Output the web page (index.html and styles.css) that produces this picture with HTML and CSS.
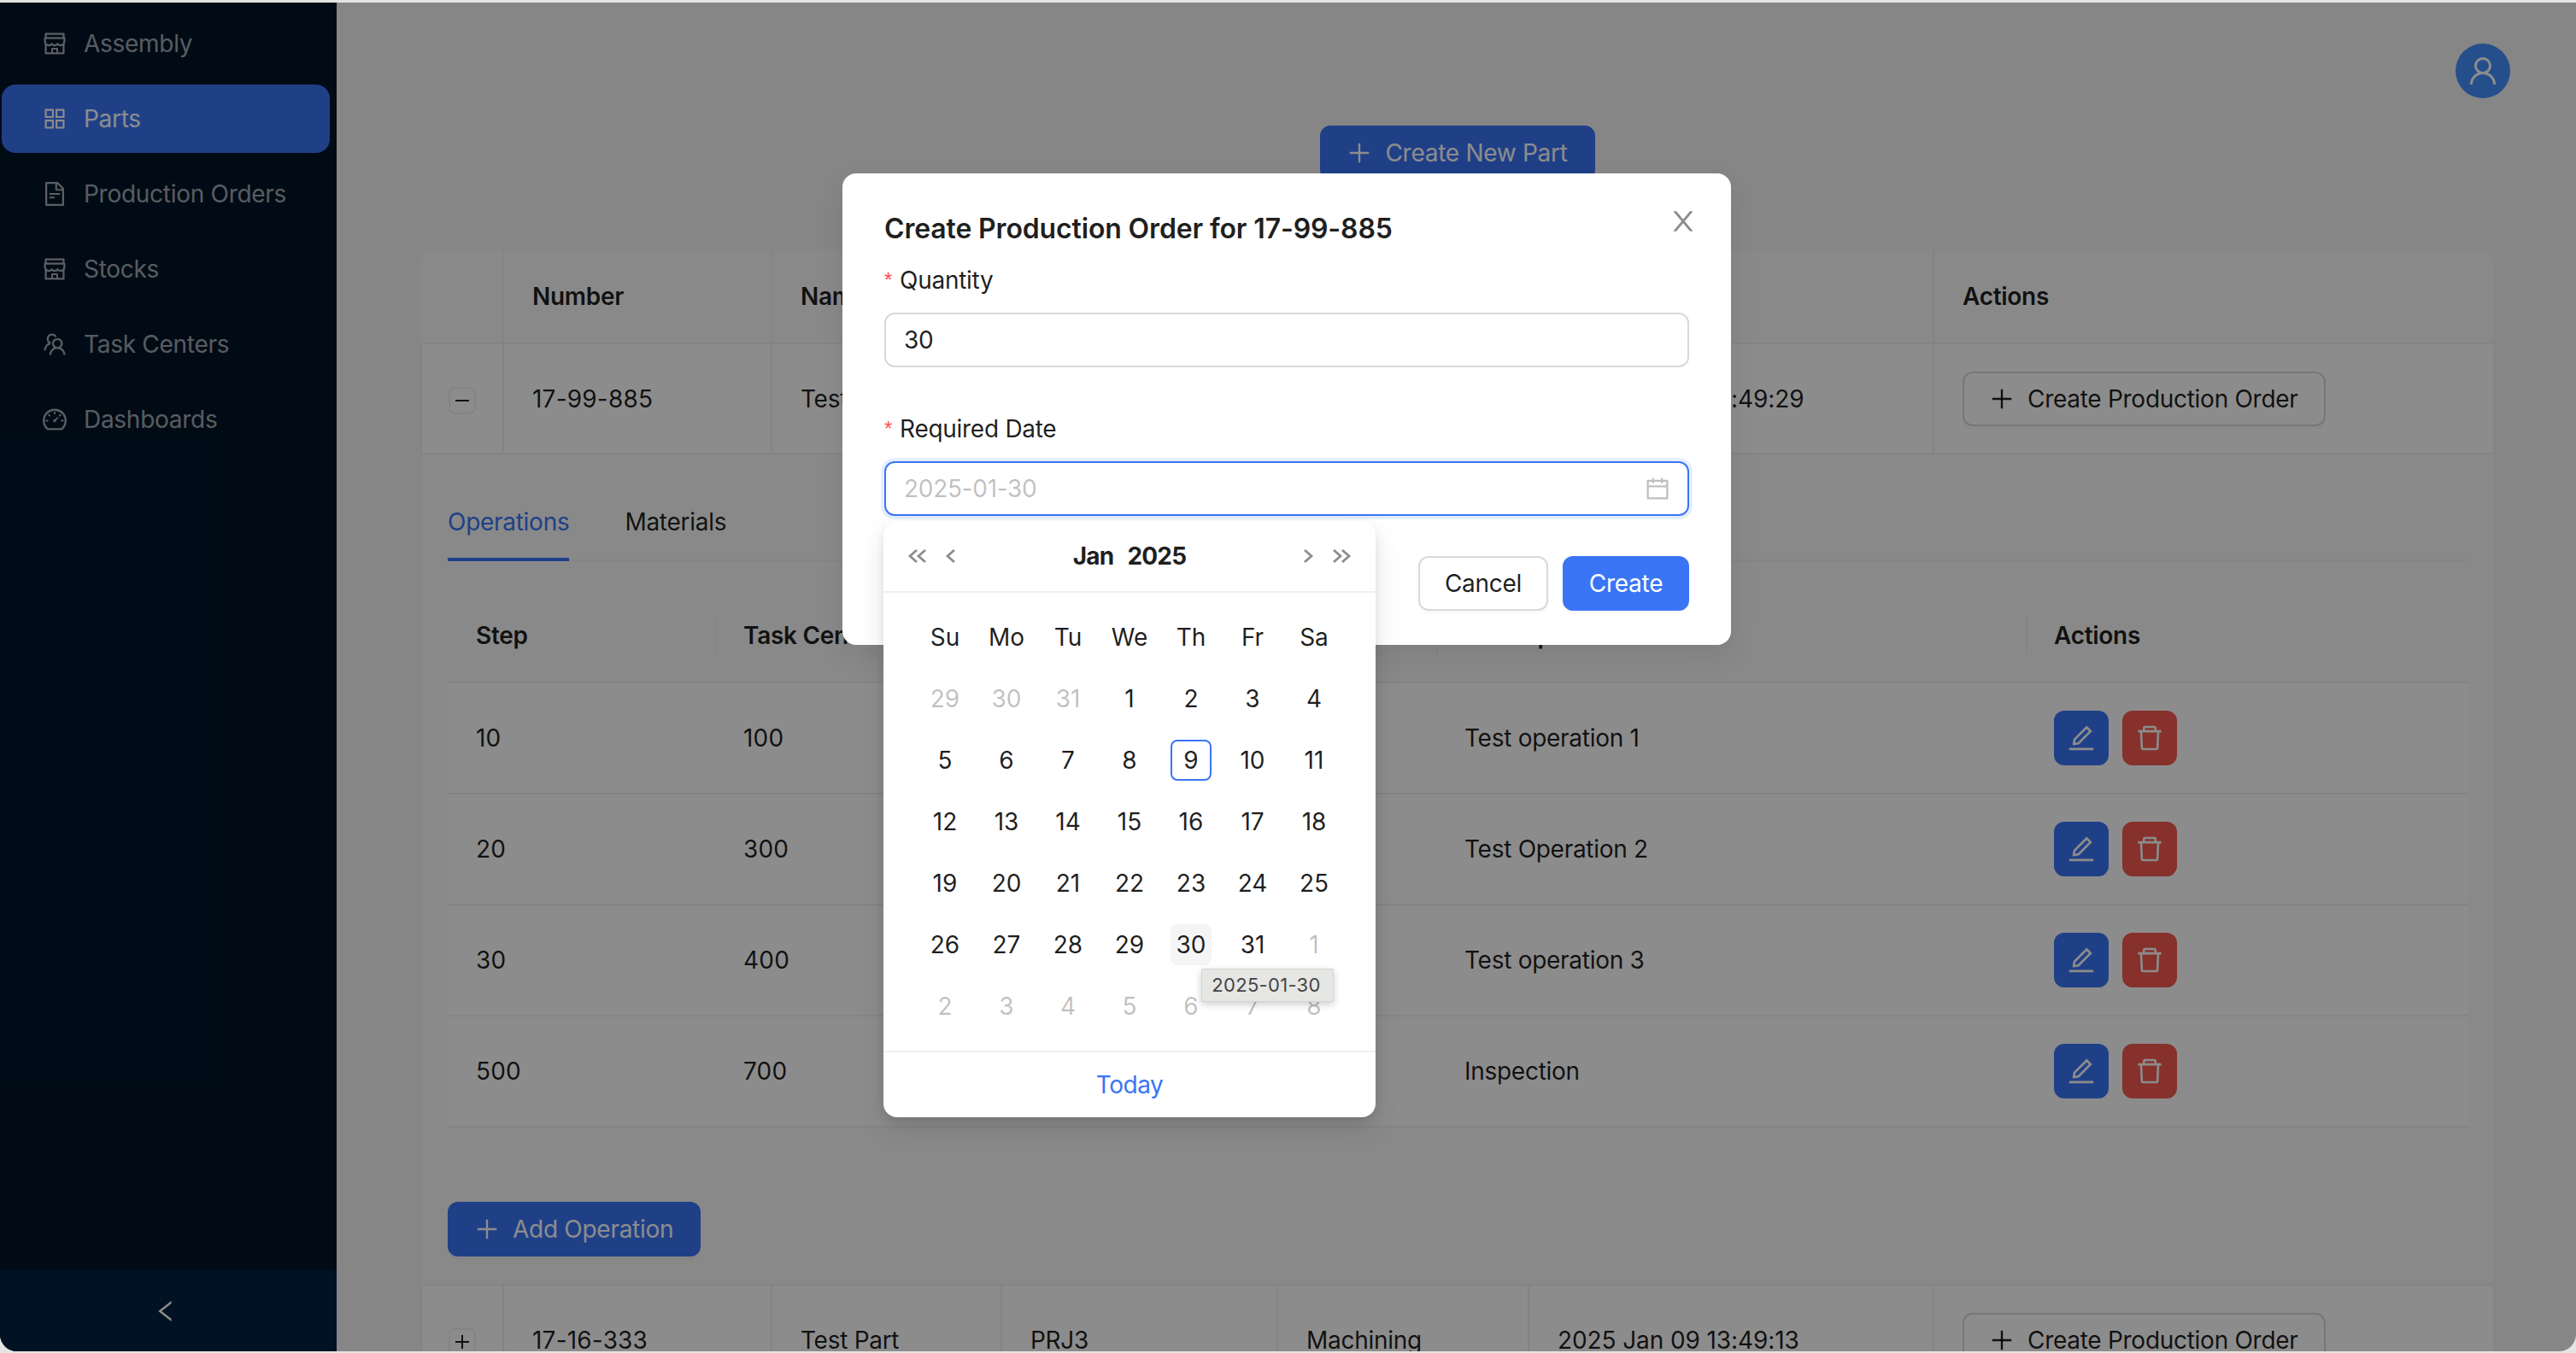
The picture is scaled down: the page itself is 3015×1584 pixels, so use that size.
FILE: index.html
```html
<!DOCTYPE html>
<html lang="en">
<head>
  <meta charset="UTF-8">
  <title>Parts</title>
  <link rel="stylesheet" href="styles.css">
</head>
<body>
  <!-- icon sprite -->
  <svg class="sprite" xmlns="http://www.w3.org/2000/svg">
    <symbol id="i-plus" viewBox="64 64 896 896"><path d="M482 152h60q8 0 8 8v704q0 8-8 8h-60q-8 0-8-8V160q0-8 8-8z"/><path d="M192 474h672q8 0 8 8v60q0 8-8 8H160q-8 0-8-8v-60q0-8 8-8z"/></symbol>
    <symbol id="i-close" viewBox="64 64 896 896"><path d="M563.8 512l262.5-312.9c4.4-5.2.7-13.1-6.1-13.1h-79.8c-4.7 0-9.2 2.1-12.3 5.7L511.6 449.8 295.1 191.7c-3-3.6-7.5-5.7-12.3-5.7H203c-6.8 0-10.5 7.9-6.1 13.1L459.4 512 196.9 824.9A7.95 7.95 0 00203 838h79.8c4.7 0 9.2-2.1 12.3-5.7l216.5-258.1 216.5 258.1c3 3.6 7.5 5.7 12.3 5.7h79.8c6.8 0 10.5-7.9 6.1-13.1L563.8 512z"/></symbol>
    <symbol id="i-edit" viewBox="64 64 896 896"><path d="M257.7 752c2 0 4-.2 6-.5L431.9 722c2-.4 3.9-1.3 5.3-2.8l423.9-423.9a9.96 9.96 0 000-14.1L694.9 114.9c-1.9-1.9-4.4-2.9-7.1-2.9s-5.2 1-7.1 2.9L256.8 538.8c-1.5 1.5-2.4 3.3-2.8 5.3l-29.5 168.2a33.5 33.5 0 009.4 29.8c6.6 6.4 14.9 9.9 23.8 9.9zm67.4-174.4L687.8 215l73.3 73.3-362.7 362.6-88.9 15.7 15.6-89zM880 836H144c-17.7 0-32 14.3-32 32v36c0 4.4 3.6 8 8 8h784c4.4 0 8-3.6 8-8v-36c0-17.7-14.3-32-32-32z"/></symbol>
    <symbol id="i-delete" viewBox="64 64 896 896"><path d="M360 184h-8c4.4 0 8-3.6 8-8v8h304v-8c0 4.4 3.6 8 8 8h-8v72h72v-80c0-35.3-28.7-64-64-64H352c-35.3 0-64 28.7-64 64v80h72v-72zm504 72H160c-17.7 0-32 14.3-32 32v32c0 4.4 3.6 8 8 8h60.4l24.7 523c1.6 34.1 29.8 61 63.9 61h454c34.2 0 62.3-26.8 63.9-61l24.7-523H888c4.4 0 8-3.6 8-8v-32c0-17.7-14.3-32-32-32zM731.3 840H292.7l-24.2-512h487l-24.2 512z"/></symbol>
    <symbol id="i-calendar" viewBox="64 64 896 896"><path d="M880 184H712v-64c0-4.4-3.6-8-8-8h-56c-4.4 0-8 3.6-8 8v64H384v-64c0-4.4-3.6-8-8-8h-56c-4.4 0-8 3.6-8 8v64H144c-17.7 0-32 14.3-32 32v664c0 17.7 14.3 32 32 32h736c17.7 0 32-14.3 32-32V216c0-17.7-14.3-32-32-32zm-40 656H184V460h656v380zM184 392V256h128v48c0 4.4 3.6 8 8 8h56c4.4 0 8-3.6 8-8v-48h256v48c0 4.4 3.6 8 8 8h56c4.4 0 8-3.6 8-8v-48h128v136H184z"/></symbol>
    <symbol id="i-user" viewBox="64 64 896 896"><path d="M858.5 763.6a374 374 0 00-80.6-119.5 375.63 375.63 0 00-119.5-80.6c-.4-.2-.8-.3-1.2-.5C719.5 518 760 444.7 760 362c0-137-111-248-248-248S264 225 264 362c0 82.7 40.5 156 102.8 201.1-.4.2-.8.3-1.2.5-44.8 18.9-85 46-119.5 80.6a375.63 375.63 0 00-80.6 119.5A371.7 371.7 0 00136 901.8a8 8 0 008 8.2h60c4.4 0 7.9-3.5 8-7.8 2-77.2 33-149.5 87.8-204.3 56.7-56.7 132-87.9 212.2-87.9s155.5 31.2 212.2 87.9C779 752.7 810 825 812 902.2c.1 4.4 3.6 7.8 8 7.8h60a8 8 0 008-8.2c-1-47.8-10.9-94.3-29.5-138.2zM512 534c-45.9 0-89.1-17.9-121.6-50.4S340 407.9 340 362c0-45.9 17.9-89.1 50.4-121.6S466.1 190 512 190s89.1 17.9 121.6 50.4S684 316.1 684 362c0 45.9-17.9 89.1-50.4 121.6S557.9 534 512 534z"/></symbol>
    <symbol id="i-shop" viewBox="64 64 896 896"><path d="M882 272.1V144c0-17.7-14.3-32-32-32H174c-17.7 0-32 14.3-32 32v128.1c-16.7 1-30 14.9-30 31.9v131.7a177 177 0 0014.4 70.4c4.3 10.2 9.6 19.8 15.6 28.9v345c0 17.6 14.3 32 32 32h676c17.7 0 32-14.3 32-32V535a175 175 0 0015.6-28.9c9.5-22.3 14.4-46 14.4-70.4V304c0-17-13.3-30.9-30-31.9zM214 184h596v88H214v-88zm362 656.1H448V736h128v104.1zm234 0H640V704c0-17.7-14.3-32-32-32H416c-17.7 0-32 14.3-32 32v136.1H214V597.9c2.9 1.4 5.9 2.8 9 4 22.3 9.4 46 14.1 70.4 14.1s48-4.7 70.4-14.1c13.8-5.8 26.8-13.2 38.7-22.1.2-.1.4-.1.6 0a180.4 180.4 0 0038.7 22.1c22.3 9.4 46 14.1 70.4 14.1 24.4 0 48-4.7 70.4-14.1 13.8-5.8 26.8-13.2 38.7-22.1.2-.1.4-.1.6 0a180.4 180.4 0 0038.7 22.1c22.3 9.4 46 14.1 70.4 14.1 24.4 0 48-4.7 70.4-14.1 3-1.3 6-2.6 9-4v242.2zm30-404.4c0 59.8-49 108.3-109.3 108.3-40.8 0-76.4-22.1-95.2-54.9-2.9-5-8.1-8.1-13.9-8.1h-.6c-5.7 0-11 3.1-13.9 8.1A109.24 109.24 0 01512 544c-40.7 0-76.2-22-95-54.7-3-5.1-8.4-8.3-14.3-8.3s-11.4 3.2-14.3 8.3a109.63 109.63 0 01-95.1 54.7C233 544 184 495.5 184 435.7v-91.2c0-.3.2-.5.5-.5h655c.3 0 .5.2.5.5v91.2z"/></symbol>
    <symbol id="i-grid" viewBox="64 64 896 896"><path d="M464 144H160c-8.8 0-16 7.2-16 16v304c0 8.8 7.2 16 16 16h304c8.8 0 16-7.2 16-16V160c0-8.8-7.2-16-16-16zm-52 268H212V212h200v200zm452-268H560c-8.8 0-16 7.2-16 16v304c0 8.8 7.2 16 16 16h304c8.8 0 16-7.2 16-16V160c0-8.8-7.2-16-16-16zm-52 268H612V212h200v200zM464 544H160c-8.8 0-16 7.2-16 16v304c0 8.8 7.2 16 16 16h304c8.8 0 16-7.2 16-16V560c0-8.8-7.2-16-16-16zm-52 268H212V612h200v200zm452-268H560c-8.8 0-16 7.2-16 16v304c0 8.8 7.2 16 16 16h304c8.8 0 16-7.2 16-16V560c0-8.8-7.2-16-16-16zm-52 268H612V612h200v200z"/></symbol>
    <symbol id="i-file" viewBox="64 64 896 896"><path d="M854.6 288.6L639.4 73.4c-6-6-14.1-9.4-22.6-9.4H192c-17.7 0-32 14.3-32 32v832c0 17.7 14.3 32 32 32h640c17.7 0 32-14.3 32-32V311.3c0-8.5-3.4-16.7-9.4-22.7zM790.2 326H602V137.8L790.2 326zm1.8 562H232V136h302v216a42 42 0 0042 42h216v494zM504 618H320c-4.4 0-8 3.6-8 8v48c0 4.4 3.6 8 8 8h184c4.4 0 8-3.6 8-8v-48c0-4.4-3.6-8-8-8zM312 490v48c0 4.4 3.6 8 8 8h384c4.4 0 8-3.6 8-8v-48c0-4.4-3.6-8-8-8H320c-4.4 0-8 3.6-8 8z"/></symbol>
    <symbol id="i-team" viewBox="64 64 896 896"><path d="M824.2 699.9a301.55 301.55 0 00-86.4-60.4C783.1 602.8 812 546.8 812 484c0-110.8-92.4-201.7-203.2-200-109.1 1.7-197 90.6-197 200 0 62.8 29 118.8 74.2 155.5a300.95 300.95 0 00-86.4 60.4C345 754.6 314 826.8 312 903.8a8 8 0 008 8.2h56c4.3 0 7.9-3.4 8-7.7 1.9-58 25.4-112.3 66.7-153.5A226.62 226.62 0 01612 684c60.9 0 118.2 23.7 161.3 66.8C814.5 792 838 846.3 840 904.3c.1 4.3 3.7 7.7 8 7.7h56a8 8 0 008-8.2c-2-77-33-149.2-87.8-203.9zM612 612c-34.2 0-66.4-13.3-90.5-37.5a126.86 126.86 0 01-37.5-91.8c.3-32.8 13.4-64.5 36.3-88 24-24.6 56.1-38.3 90.4-38.7 33.9-.3 66.8 12.9 91 36.6 24.8 24.3 38.4 56.8 38.4 91.4 0 34.2-13.3 66.3-37.5 90.5A127.3 127.3 0 01612 612zM361.5 510.4c-.9-8.7-1.4-17.5-1.4-26.4 0-15.9 1.5-31.4 4.3-46.5.7-3.6-1.2-7.3-4.5-8.8-13.6-6.1-26.1-14.5-36.9-25.1a127.54 127.54 0 01-38.7-95.4c.9-32.1 13.8-62.6 36.3-85.6 24.7-25.3 57.9-39.1 93.2-38.7 31.9.3 62.7 12.6 86 34.4 7.9 7.4 14.7 15.6 20.4 24.4 2 3.1 5.9 4.4 9.3 3.2 17.6-6.1 36.2-10.4 55.3-12.4 5.6-.6 8.8-6.6 6.3-11.6-32.5-64.3-98.9-108.7-175.7-109.9-110.9-1.7-203.3 89.2-203.3 199.9 0 62.8 28.9 118.8 74.2 155.5-31.8 14.7-61.1 35-86.5 60.4-54.8 54.7-85.8 126.9-87.8 204a8 8 0 008 8.2h56.1c4.3 0 7.9-3.4 8-7.7 1.9-58 25.4-112.3 66.7-153.5 29.4-29.4 65.4-49.8 104.7-59.7 3.9-1 6.5-4.7 6-8.7z"/></symbol>
    <symbol id="i-dash" viewBox="64 64 896 896"><path d="M924.8 385.6a446.7 446.7 0 00-96-142.4 446.7 446.7 0 00-142.4-96C631.1 123.8 572.5 112 512 112s-119.1 11.8-174.4 35.2a446.7 446.7 0 00-142.4 96 446.7 446.7 0 00-96 142.4C75.8 440.9 64 499.5 64 560c0 132.7 58.3 257.7 159.9 343.1l1.7 1.4c5.8 4.8 13.1 7.5 20.6 7.5h531.7c7.5 0 14.8-2.7 20.6-7.5l1.7-1.4C901.7 817.7 960 692.7 960 560c0-60.5-11.9-119.1-35.2-174.4zM761.4 836H262.6A371.12 371.12 0 01140 560c0-99.4 38.7-192.8 109-263 70.3-70.3 163.7-109 263-109 99.4 0 192.8 38.7 263 109 70.3 70.3 109 163.7 109 263 0 105.6-44.5 205.5-122.6 276zM623.5 421.5a8.03 8.03 0 00-11.3 0L527.7 506c-18.7-5-39.4-.2-54.1 14.5a55.95 55.95 0 000 79.2 55.95 55.95 0 0079.2 0 55.87 55.87 0 0014.5-54.1l84.5-84.5c3.1-3.1 3.1-8.2 0-11.3l-28.3-28.3zM490 320h44c4.4 0 8-3.6 8-8v-80c0-4.4-3.6-8-8-8h-44c-4.4 0-8 3.6-8 8v80c0 4.4 3.6 8 8 8zm260 218v44c0 4.4 3.6 8 8 8h80c4.4 0 8-3.6 8-8v-44c0-4.4-3.6-8-8-8h-80c-4.4 0-8 3.6-8 8zm12.7-197.2l-31.1-31.1a8.03 8.03 0 00-11.3 0l-56.6 56.6a8.03 8.03 0 000 11.3l31.1 31.1c3.1 3.1 8.2 3.1 11.3 0l56.6-56.6c3.1-3.1 3.1-8.2 0-11.3zm-458.6-31.1a8.03 8.03 0 00-11.3 0l-31.1 31.1a8.03 8.03 0 000 11.3l56.6 56.6c3.1 3.1 8.2 3.1 11.3 0l31.1-31.1c3.1-3.1 3.1-8.2 0-11.3l-56.6-56.6zM262 530h-80c-4.4 0-8 3.6-8 8v44c0 4.4 3.6 8 8 8h80c4.4 0 8-3.6 8-8v-44c0-4.4-3.6-8-8-8z"/></symbol>
    <symbol id="i-left" viewBox="64 64 896 896"><path d="M724 218.3V141c0-6.7-7.7-10.4-12.9-6.3L260.3 486.8a31.86 31.86 0 000 50.3l450.8 352.1c5.3 4.1 12.9.4 12.9-6.3v-77.3c0-4.9-2.3-9.6-6.1-12.6l-360-281 360-281.1c3.8-3 6.1-7.7 6.1-12.6z"/></symbol>
  </svg>

  <div class="app">
    <!-- Sidebar -->
    <aside class="sidebar">
      <nav class="menu">
        <a class="menu-item"><svg class="icon"><use href="#i-shop"/></svg>Assembly</a>
        <a class="menu-item active"><svg class="icon"><use href="#i-grid"/></svg>Parts</a>
        <a class="menu-item"><svg class="icon"><use href="#i-file"/></svg>Production Orders</a>
        <a class="menu-item"><svg class="icon"><use href="#i-shop"/></svg>Stocks</a>
        <a class="menu-item"><svg class="icon"><use href="#i-team"/></svg>Task Centers</a>
        <a class="menu-item"><svg class="icon"><use href="#i-dash"/></svg>Dashboards</a>
      </nav>
      <div class="collapse"><svg class="icon-collapse"><use href="#i-left"/></svg></div>
    </aside>

    <!-- Main content -->
    <main class="main">
      <div class="topbar">
        <span class="avatar"><svg class="icon-avatar"><use href="#i-user"/></svg></span>
      </div>
      <div class="create-row">
        <button class="btn primary"><svg class="icon"><use href="#i-plus"/></svg>Create New Part</button>
      </div>

      <table class="parts">
        <colgroup>
          <col class="c-expand"><col class="c-number"><col class="c-name"><col class="c-project"><col class="c-type"><col class="c-date"><col class="c-actions">
        </colgroup>
        <thead>
          <tr><th></th><th>Number</th><th>Name</th><th>Project</th><th>Type</th><th>Created</th><th>Actions</th></tr>
        </thead>
        <tbody>
          <tr class="part-row">
            <td><span class="expander minus"></span></td>
            <td class="num">17-99-885</td>
            <td>Test Part</td>
            <td>PRJ1</td>
            <td>Machining</td>
            <td class="date">2025 Jan 09 13:49:29</td>
            <td><button class="btn"><svg class="icon"><use href="#i-plus"/></svg>Create Production Order</button></td>
          </tr>
          <tr>
            <td colspan="7" class="expanded">
              <div class="tabs">
                <span class="tab active">Operations</span>
                <span class="tab">Materials</span>
              </div>
              <table class="ops">
                <colgroup>
                  <col class="o-step"><col class="o-center"><col class="o-time"><col class="o-desc"><col class="o-actions">
                </colgroup>
                <thead>
                  <tr><th>Step</th><th>Task Center</th><th></th><th>Description</th><th>Actions</th></tr>
                </thead>
                <tbody>
                  <tr>
                    <td class="num">10</td><td class="num">100</td><td></td><td>Test operation 1</td>
                    <td><div class="row-actions"><button class="icon-btn edit"><svg class="icon-lg"><use href="#i-edit"/></svg></button><button class="icon-btn del"><svg class="icon-lg"><use href="#i-delete"/></svg></button></div></td>
                  </tr>
                  <tr>
                    <td class="num">20</td><td class="num">300</td><td></td><td>Test Operation 2</td>
                    <td><div class="row-actions"><button class="icon-btn edit"><svg class="icon-lg"><use href="#i-edit"/></svg></button><button class="icon-btn del"><svg class="icon-lg"><use href="#i-delete"/></svg></button></div></td>
                  </tr>
                  <tr>
                    <td class="num">30</td><td class="num">400</td><td></td><td>Test operation 3</td>
                    <td><div class="row-actions"><button class="icon-btn edit"><svg class="icon-lg"><use href="#i-edit"/></svg></button><button class="icon-btn del"><svg class="icon-lg"><use href="#i-delete"/></svg></button></div></td>
                  </tr>
                  <tr>
                    <td class="num">500</td><td class="num">700</td><td></td><td>Inspection</td>
                    <td><div class="row-actions"><button class="icon-btn edit"><svg class="icon-lg"><use href="#i-edit"/></svg></button><button class="icon-btn del"><svg class="icon-lg"><use href="#i-delete"/></svg></button></div></td>
                  </tr>
                </tbody>
              </table>
              <button class="btn primary add-op"><svg class="icon"><use href="#i-plus"/></svg>Add Operation</button>
            </td>
          </tr>
          <tr class="part-row">
            <td><span class="expander plus"></span></td>
            <td class="num">17-16-333</td>
            <td>Test Part</td>
            <td>PRJ3</td>
            <td>Machining</td>
            <td class="date">2025 Jan 09 13:49:13</td>
            <td><button class="btn"><svg class="icon"><use href="#i-plus"/></svg>Create Production Order</button></td>
          </tr>
        </tbody>
      </table>
    </main>

    <!-- Modal -->
    <div class="overlay">
      <div class="modal">
        <svg class="modal-close"><use href="#i-close"/></svg>
        <h2 class="modal-title">Create Production Order for 17-99-885</h2>
        <label class="field-label"><span class="req">*</span>Quantity</label>
        <div class="input">30</div>
        <label class="field-label second"><span class="req">*</span>Required Date</label>
        <div class="input focused">
          <span class="placeholder">2025-01-30</span>
          <svg class="icon icon-cal"><use href="#i-calendar"/></svg>
        </div>
        <div class="modal-footer">
          <button class="btn cancel">Cancel</button>
          <button class="btn solid">Create</button>
        </div>

        <!-- Date picker dropdown -->
        <div class="picker">
          <div class="picker-head">
            <div class="nav-group">
              <svg class="nav" viewBox="0 0 24 18"><path d="M11 2 3 9l8 7M21 2l-8 7 8 7"/></svg>
              <svg class="nav single" viewBox="0 0 14 18"><path d="M11 2 3 9l8 7"/></svg>
            </div>
            <div class="picker-title"><span>Jan</span><span>2025</span></div>
            <div class="nav-group">
              <svg class="nav single" viewBox="0 0 14 18"><path d="M3 2l8 7-8 7"/></svg>
              <svg class="nav" viewBox="0 0 24 18"><path d="M3 2l8 7-8 7M13 2l8 7-8 7"/></svg>
            </div>
          </div>
          <div class="picker-body">
            <span class="wd">Su</span><span class="wd">Mo</span><span class="wd">Tu</span><span class="wd">We</span><span class="wd">Th</span><span class="wd">Fr</span><span class="wd">Sa</span>
            <span class="day out"><i>29</i></span><span class="day out"><i>30</i></span><span class="day out"><i>31</i></span><span class="day"><i>1</i></span><span class="day"><i>2</i></span><span class="day"><i>3</i></span><span class="day"><i>4</i></span>
            <span class="day"><i>5</i></span><span class="day"><i>6</i></span><span class="day"><i>7</i></span><span class="day"><i>8</i></span><span class="day today"><i>9</i></span><span class="day"><i>10</i></span><span class="day"><i>11</i></span>
            <span class="day"><i>12</i></span><span class="day"><i>13</i></span><span class="day"><i>14</i></span><span class="day"><i>15</i></span><span class="day"><i>16</i></span><span class="day"><i>17</i></span><span class="day"><i>18</i></span>
            <span class="day"><i>19</i></span><span class="day"><i>20</i></span><span class="day"><i>21</i></span><span class="day"><i>22</i></span><span class="day"><i>23</i></span><span class="day"><i>24</i></span><span class="day"><i>25</i></span>
            <span class="day"><i>26</i></span><span class="day"><i>27</i></span><span class="day"><i>28</i></span><span class="day"><i>29</i></span><span class="day hover"><i>30</i></span><span class="day"><i>31</i></span><span class="day out"><i>1</i></span>
            <span class="day out"><i>2</i></span><span class="day out"><i>3</i></span><span class="day out"><i>4</i></span><span class="day out"><i>5</i></span><span class="day out"><i>6</i></span><span class="day out"><i>7</i></span><span class="day out"><i>8</i></span>
          </div>
          <div class="picker-foot">Today</div>
          <div class="native-tip">2025-01-30</div>
        </div>
      </div>
    </div>
  </div>
</body>
</html>
```

FILE: styles.css
```css
/* Basic styling */
* {
  box-sizing: border-box;
}

html, body {
  height: 100%;
  margin: 0;
  overflow: hidden;
}

body {
  background: #e4e4e4;
  padding: 3px 0 2px;
  font-family: Inter, "Liberation Sans", sans-serif;
  font-size: 28px;
  line-height: 44px;
  letter-spacing: -0.28px;
  color: rgba(0, 0, 0, 0.88);
}

.sprite {
  display: none;
}

button {
  font: inherit;
  letter-spacing: inherit;
}

.num {
  letter-spacing: 0.2px;
}

.date {
  letter-spacing: -0.1px;
}

.app {
  position: relative;
  display: flex;
  height: 100%;
  overflow: hidden;
  background: #f5f5f5;
  border-radius: 0 0 20px 20px;
}

.icon {
  width: 28px;
  height: 28px;
  flex: none;
  fill: currentColor;
}

.icon-lg {
  width: 32px;
  height: 32px;
  fill: currentColor;
}

/* Sidebar */
.sidebar {
  width: 394px;
  flex: none;
  display: flex;
  flex-direction: column;
  background: #001529;
}

.menu {
  flex: 1;
  padding: 8px 8px 0 2px;
  display: flex;
  flex-direction: column;
  gap: 8px;
}

.menu-item {
  height: 80px;
  padding-left: 48px;
  display: flex;
  align-items: center;
  gap: 20px;
  border-radius: 16px;
  color: rgba(255, 255, 255, 0.65);
}

.menu-item.active {
  background: #3a75f6;
  color: #fff;
}

.collapse {
  height: 95px;
  display: flex;
  align-items: center;
  justify-content: center;
  background: #002140;
  color: #fff;
}

.icon-collapse {
  width: 28px;
  height: 28px;
  margin-right: 6px;
  fill: currentColor;
}

/* Main */
.main {
  flex: 1;
  min-width: 0;
  padding: 0 95px 0 98px;
}

.topbar {
  display: flex;
  justify-content: flex-end;
  padding: 48px 0 32px;
  margin-right: -18px;
}

.avatar {
  width: 64px;
  height: 64px;
  border-radius: 50%;
  background: #4291fe;
  color: #fff;
  display: flex;
  align-items: center;
  justify-content: center;
}

.icon-avatar {
  width: 36px;
  height: 36px;
  fill: currentColor;
}

.create-row {
  display: flex;
  justify-content: center;
  margin-bottom: 82px;
}

.btn {
  height: 64px;
  padding: 0 30px;
  display: inline-flex;
  align-items: center;
  gap: 16px;
  border: 2px solid #d9d9d9;
  border-radius: 12px;
  background: #fff;
  color: rgba(0, 0, 0, 0.88);
  box-shadow: 0 4px 0 rgba(0, 0, 0, 0.02);
}

.btn.primary,
.btn.solid {
  background: #3a75f6;
  border-color: #3a75f6;
  color: #fff;
}

/* Tables */
table {
  width: 100%;
  border-collapse: separate;
  border-spacing: 0;
  table-layout: fixed;
}

th {
  font-weight: 600;
  text-align: left;
}

.parts {
  width: 2428px;
  background: #fff;
  border-radius: 16px 16px 0 0;
}

.c-expand { width: 98px; }
.c-number { width: 314px; }
.c-name { width: 269px; }
.c-project { width: 323px; }
.c-type { width: 294px; }
.c-date { width: 474px; }
.c-actions { width: 656px; }

.parts > thead th {
  height: 110px;
  padding: 0 32px 0 33px;
  background: #fafafa;
  border-bottom: 2px solid #f0f0f0;
  border-right: 2px solid #f0f0f0;
}

.parts > thead th:first-child {
  border-top-left-radius: 16px;
}

.parts > thead th:last-child {
  border-top-right-radius: 16px;
}

.part-row td {
  height: 129px;
  padding: 0 32px 0 33px;
  border-bottom: 2px solid #f0f0f0;
  border-right: 2px solid #f0f0f0;
}

.part-row td:first-child {
  padding: 0;
  text-align: center;
  border-left: 2px solid #f0f0f0;
}

.expander {
  position: relative;
  display: inline-block;
  width: 32px;
  height: 32px;
  vertical-align: middle;
  border: 2px solid #f0f0f0;
  border-radius: 8px;
  background: #fff;
}

.expander::before,
.plus::after {
  content: "";
  position: absolute;
  left: 6px;
  right: 6px;
  top: 13px;
  height: 2px;
  background: rgba(0, 0, 0, 0.88);
}

.plus::after {
  left: 13px;
  right: 13px;
  top: 6px;
  width: 2px;
  height: 16px;
}

.expanded {
  padding: 35px 30px 32px;
  background: #fafafa;
  border-bottom: 2px solid #f0f0f0;
  border-left: 2px solid #f0f0f0;
  border-right: 2px solid #f0f0f0;
}

.tabs {
  display: flex;
  gap: 65px;
  border-bottom: 2px solid #f0f0f0;
  margin-bottom: 33px;
}

.tab {
  height: 90px;
  padding-top: 22px;
  margin-bottom: -2px;
}

.tab.active {
  color: #3a75f6;
  border-bottom: 4px solid #3a75f6;
}

.o-step { width: 313px; }
.o-center { width: 422px; }
.o-time { width: 422px; }
.o-desc { width: 690px; }
.o-actions { width: 518px; }

.ops th {
  position: relative;
  height: 110px;
  padding: 0 33px;
  border-bottom: 2px solid #f0f0f0;
}

.ops th + th::before {
  content: "";
  position: absolute;
  left: 0;
  top: 33px;
  height: 42px;
  width: 2px;
  background: #f0f0f0;
}

.ops td {
  height: 130px;
  padding: 0 33px;
  background: #fff;
  border-bottom: 2px solid #f0f0f0;
}

.row-actions {
  display: flex;
  gap: 16px;
}

.icon-btn {
  width: 64px;
  height: 64px;
  padding: 0;
  border: 0;
  border-radius: 12px;
  display: flex;
  align-items: center;
  justify-content: center;
  color: #fff;
}

.icon-btn.edit {
  background: #3a75f6;
}

.icon-btn.del {
  background: #f55a50;
}

.add-op {
  margin-top: 87px;
  display: flex;
}

/* Modal */
.overlay {
  position: absolute;
  inset: 0;
  background: rgba(0, 0, 0, 0.45);
}

.modal {
  position: relative;
  width: 1040px;
  height: 552px;
  margin: 200px 0 0 986px;
  padding: 43px 49px 40px;
  background: #fff;
  border-radius: 16px;
  box-shadow: 0 12px 32px rgba(0, 0, 0, 0.08);
}

.modal-close {
  position: absolute;
  top: 40px;
  right: 40px;
  width: 32px;
  height: 32px;
  fill: rgba(0, 0, 0, 0.45);
}

.modal-title {
  margin: 0 0 16px;
  font-size: 32px;
  font-weight: 600;
  line-height: 44px;
  letter-spacing: -0.15px;
}

.field-label {
  display: flex;
  height: 44px;
  align-items: center;
  margin-bottom: 16px;
}

.field-label.second {
  margin-top: 50px;
}

.req {
  color: #ff4d4f;
  margin-right: 9px;
  font-family: "Liberation Sans", sans-serif;
  font-size: 24px;
  line-height: 1;
}

.input {
  height: 64px;
  padding: 0 21px;
  display: flex;
  align-items: center;
  justify-content: space-between;
  border: 2px solid #d9d9d9;
  border-radius: 12px;
}

.input.focused {
  border-color: #3a75f6;
  box-shadow: 0 0 0 4px rgba(5, 100, 255, 0.1);
}

.placeholder,
.icon-cal {
  color: rgba(0, 0, 0, 0.25);
}

.modal-footer {
  margin-top: 47px;
  display: flex;
  justify-content: flex-end;
  gap: 17px;
}

.modal-footer .btn {
  justify-content: center;
  padding: 0;
  width: 148px;
}

.modal-footer .btn.cancel {
  width: 152px;
}

/* Date picker */
.picker {
  position: absolute;
  left: 48px;
  top: 407px;
  width: 576px;
  height: 698px;
  background: #fff;
  border-radius: 16px;
  box-shadow: 0 12px 32px rgba(0, 0, 0, 0.1), 0 6px 12px rgba(0, 0, 0, 0.08);
}

.picker-head {
  height: 84px;
  padding: 0 28px;
  display: flex;
  align-items: center;
  justify-content: space-between;
  border-bottom: 2px solid #f0f0f0;
}

.nav-group {
  display: flex;
  align-items: center;
  gap: 20px;
}

.nav {
  width: 24px;
  height: 18px;
  fill: none;
  stroke: rgba(0, 0, 0, 0.45);
  stroke-width: 2.8;
}

.nav.single {
  width: 14px;
}

.picker-title {
  display: flex;
  gap: 16px;
  font-weight: 700;
  letter-spacing: -0.8px;
}

.picker-body {
  padding: 16px 36px;
  display: grid;
  grid-template-columns: repeat(7, 72px);
  grid-auto-rows: 72px;
  justify-items: center;
  align-items: center;
  border-bottom: 2px solid #f0f0f0;
  letter-spacing: 0;
}

.day {
  width: 48px;
  height: 48px;
  display: flex;
  align-items: center;
  justify-content: center;
  border-radius: 8px;
}

.day i {
  font-style: normal;
}

.day.out {
  color: rgba(0, 0, 0, 0.25);
}

.day.today {
  border: 2px solid #3a75f6;
}

.day.hover {
  background: #f5f5f5;
}

.picker-foot {
  height: 76px;
  display: flex;
  align-items: center;
  justify-content: center;
  color: #3a75f6;
  letter-spacing: -0.5px;
}

.native-tip {
  position: absolute;
  left: 372px;
  top: 524px;
  width: 155px;
  height: 39px;
  padding-right: 3px;
  text-align: center;
  font-size: 22px;
  line-height: 37px;
  letter-spacing: 0.3px;
  color: #444;
  background: #e6e6e4;
  border: 1px solid #d4d4d2;
  border-radius: 2px;
  box-shadow: 0 3px 8px rgba(0, 0, 0, 0.2);
}
```
